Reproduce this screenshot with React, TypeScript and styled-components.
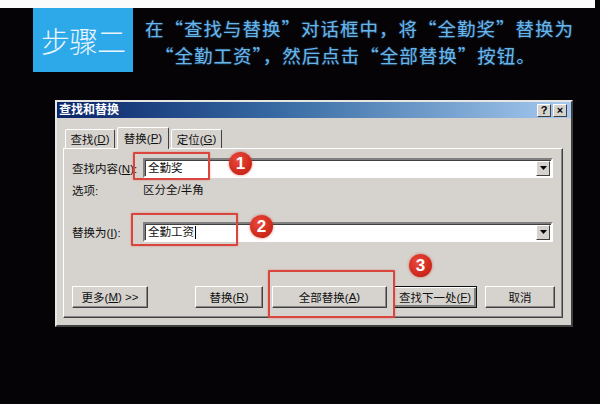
import React from "react";
import styled, { createGlobalStyle, css } from "styled-components";

const Global = createGlobalStyle`
  html, body { margin: 0; padding: 0; background: #050305; }
  body { width: 600px; height: 404px; overflow: hidden; font-family: "Noto Sans CJK SC", "Noto Sans", sans-serif; }
`;

const Page = styled.div`
  width: 600px;
  height: 404px;
  background: #050305;
  display: flex;
  flex-direction: column;
`;

const TopBand = styled.div`
  width: 595px;
  height: 8px;
  background: #fbfbfb;
`;

const Header = styled.div`
  display: flex;
  align-items: flex-start;
  gap: 12px;
  padding-left: 33px;
  height: 64px;
`;

const StepBox = styled.div`
  width: 100px;
  height: 64px;
  background: #2da8e8;
  color: #eaf6fd;
  font-size: 29px;
  font-weight: 300;
  display: flex;
  align-items: center;
  justify-content: center;
  letter-spacing: -1px;
`;

const Heading = styled.div`
  padding-top: 7px;
  color: #66b6ec;
  font-size: 18.5px;
  letter-spacing: 1px;
  line-height: 27px;
  text-shadow: 0 0 2px rgba(80, 160, 230, 0.6);
  white-space: nowrap;
`;

const HeadLine = styled.div<{ $indent?: number }>`
  padding-left: ${(p) => p.$indent ?? 0}px;
  height: 27px;
`;

const Dialog = styled.div`
  position: relative;
  margin: 28px 0 0 55px;
  width: 518px;
  height: 227px;
  box-sizing: border-box;
  background: #d6d3ce;
  border: 2px solid;
  border-color: #e8e6e2 #404040 #404040 #e8e6e2;
  display: flex;
  flex-direction: column;
  font-family: "Liberation Sans", "Noto Sans CJK SC", sans-serif;
  font-size: 11.5px;
  color: #111;
`;

const TitleBar = styled.div`
  height: 16px;
  background: linear-gradient(90deg, #0a246a 0%, #3a6ea5 45%, #a6caf0 100%);
  display: flex;
  align-items: center;
  padding: 0 4px 0 2px;
`;

const TitleText = styled.div`
  flex: 1;
  color: #fff;
  font-weight: 700;
  font-size: 12px;
  line-height: 16px;
`;

const CapButton = styled.div`
  width: 14px;
  height: 13px;
  box-sizing: border-box;
  background: #d6d3ce;
  border: 1px solid;
  border-color: #fff #404040 #404040 #fff;
  font-family: "Liberation Sans", sans-serif;
  font-weight: 700;
  font-size: 11px;
  line-height: 11px;
  text-align: center;
  color: #000;
  margin-left: 2px;
`;

const Body = styled.div`
  flex: 1;
  display: flex;
  flex-direction: column;
  padding: 8px 8px 7px 6px;
`;

const TabRow = styled.div`
  display: flex;
  align-items: flex-end;
  height: 22px;
  padding-left: 2px;
  gap: 2px;
`;

const Tab = styled.div<{ $active?: boolean; $w: number }>`
  width: ${(p) => p.$w}px;
  height: ${(p) => (p.$active ? 22 : 19)}px;
  box-sizing: border-box;
  border: 1px solid;
  border-bottom: none;
  border-color: #fff #404040 transparent #fff;
  border-radius: 2px 2px 0 0;
  display: flex;
  align-items: center;
  justify-content: center;
  background: #d6d3ce;
  ${(p) =>
    p.$active &&
    css`
      margin-bottom: -1px;
      position: relative;
      z-index: 1;
      padding-bottom: 2px;
    `}
`;

const Panel = styled.div`
  flex: 1;
  box-sizing: border-box;
  width: 500px;
  border: 1px solid;
  border-color: #fff #404040 #404040 #fff;
  box-shadow: inset -1px -1px 0 #888;
  display: flex;
  flex-direction: column;
  padding: 9px 0 0 8px;
`;

const FieldRow = styled.div<{ $top?: number; $h: number }>`
  display: flex;
  align-items: center;
  height: ${(p) => p.$h}px;
  margin-top: ${(p) => p.$top ?? 0}px;
`;

const Label = styled.div`
  width: 71px;
  flex: none;
  white-space: nowrap;
`;

const Combo = styled.div`
  width: 410px;
  height: 20px;
  box-sizing: border-box;
  background: #fff;
  border: 2px solid;
  border-color: #808080 #fff #fff #808080;
  box-shadow: inset 1px 1px 0 #404040;
  display: flex;
  align-items: center;
  padding: 0 1px 0 3px;
`;

const ComboText = styled.div`
  flex: 1;
  line-height: 16px;
`;

const Caret = styled.span`
  display: inline-block;
  width: 1px;
  height: 13px;
  background: #000;
  vertical-align: middle;
  margin-left: 1px;
`;

const DropButton = styled.div`
  width: 14px;
  height: 15px;
  box-sizing: border-box;
  background: #d6d3ce;
  border: 1px solid;
  border-color: #fff #404040 #404040 #fff;
  display: flex;
  align-items: center;
  justify-content: center;
`;

const ButtonRow = styled.div`
  display: flex;
  align-items: center;
  margin-top: 44px;
  height: 22px;
`;

const Button = styled.div<{ $w: number; $gap?: number; $default?: boolean }>`
  width: ${(p) => p.$w}px;
  height: 22px;
  margin-left: ${(p) => p.$gap ?? 0}px;
  box-sizing: border-box;
  background: #d6d3ce;
  border: 1px solid;
  border-color: #fff #404040 #404040 #fff;
  box-shadow: inset -1px -1px 0 #888;
  display: flex;
  align-items: center;
  justify-content: center;
  white-space: nowrap;
  ${(p) =>
    p.$default &&
    css`
      border: 1px solid #111;
      box-shadow: inset 1px 1px 0 #fff, inset -2px -2px 0 #808080;
    `}
`;

const U = styled.span`
  text-decoration: underline;
`;

const RedBox = styled.div<{ $x: number; $y: number; $w: number; $h: number }>`
  position: absolute;
  left: ${(p) => p.$x}px;
  top: ${(p) => p.$y}px;
  width: ${(p) => p.$w}px;
  height: ${(p) => p.$h}px;
  box-sizing: border-box;
  border: 2px solid #d9463e;
  border-radius: 1px;
  box-shadow: 0 0 2px rgba(220, 60, 50, 0.5);
  pointer-events: none;
`;

const Badge = styled.div<{ $x: number; $y: number }>`
  position: absolute;
  left: ${(p) => p.$x}px;
  top: ${(p) => p.$y}px;
  width: 23px;
  height: 23px;
  border-radius: 50%;
  background: radial-gradient(circle at 40% 35%, #ea4a3c 0%, #d02a1e 60%, #b81c14 100%);
  box-shadow: 0 0 3px rgba(210, 40, 30, 0.6);
  color: #fff;
  font-family: "Liberation Sans", "Noto Sans", sans-serif;
  font-weight: 700;
  font-size: 17px;
  line-height: 23px;
  text-align: center;
`;

const Arrow = () => (
  <svg width="7" height="4" viewBox="0 0 7 4">
    <path d="M0 0H7L3.5 4Z" fill="#000" />
  </svg>
);

export default function App() {
  return (
    <Page>
      <Global />
      <TopBand />
      <Header>
        <StepBox>步骤二</StepBox>
        <Heading>
          <HeadLine>在“查找与替换”对话框中，将“全勤奖”替换为</HeadLine>
          <HeadLine $indent={10}>“全勤工资”，然后点击“全部替换”按钮。</HeadLine>
        </Heading>
      </Header>
      <Dialog>
        <TitleBar>
          <TitleText>查找和替换</TitleText>
          <CapButton>?</CapButton>
          <CapButton>×</CapButton>
        </TitleBar>
        <Body>
          <TabRow>
            <Tab $w={50}>查找(<U>D</U>)</Tab>
            <Tab $w={52} $active>替换(<U>P</U>)</Tab>
            <Tab $w={51}>定位(<U>G</U>)</Tab>
          </TabRow>
          <Panel>
            <FieldRow $h={20}>
              <Label>查找内容(<U>N</U>):</Label>
              <Combo>
                <ComboText>全勤奖</ComboText>
                <DropButton><Arrow /></DropButton>
              </Combo>
            </FieldRow>
            <FieldRow $h={16} $top={4}>
              <Label>选项:</Label>
              <ComboText>区分全/半角</ComboText>
            </FieldRow>
            <FieldRow $h={20} $top={24}>
              <Label>替换为(<U>I</U>):</Label>
              <Combo>
                <ComboText>全勤工资<Caret /></ComboText>
                <DropButton><Arrow /></DropButton>
              </Combo>
            </FieldRow>
            <ButtonRow>
              <Button $w={76}>更多(<U>M</U>) &gt;&gt;</Button>
              <Button $w={68} $gap={47}>替换(<U>R</U>)</Button>
              <Button $w={115} $gap={9}>全部替换(<U>A</U>)</Button>
              <Button $w={84} $gap={6} $default>查找下一处(<U>F</U>)</Button>
              <Button $w={70} $gap={8}>取消</Button>
            </ButtonRow>
          </Panel>
        </Body>
        <RedBox $x={76} $y={50} $w={77} $h={28} />
        <RedBox $x={74} $y={111} $w={107} $h={33} />
        <RedBox $x={211} $y={168} $w={127} $h={48} />
        <Badge $x={172} $y={50}>1</Badge>
        <Badge $x={193} $y={113}>2</Badge>
        <Badge $x={352} $y={152}>3</Badge>
      </Dialog>
    </Page>
  );
}
